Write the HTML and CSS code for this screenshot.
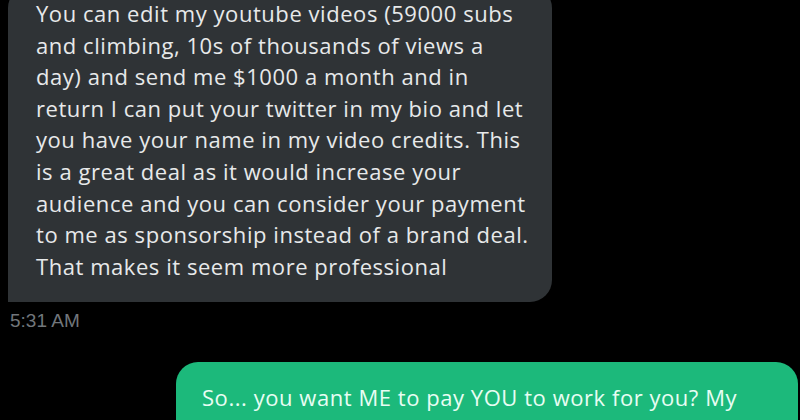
FILE: index.html
```html
<!DOCTYPE html>
<html>
<head>
<meta charset="utf-8">
<link rel="stylesheet" href="styles.css">
</head>
<body>
<div class="chat">
  <div class="msg-in">
    <div class="bubble-in">You can edit my youtube videos (59000 subs<br>and climbing, 10s of thousands of views a<br>day) and send me $1000 a month and in<br>return I can put your twitter in my bio and let<br>you have your name in my video credits. This<br>is a great deal as it would increase your<br>audience and you can consider your payment<br>to me as sponsorship instead of a brand deal.<br>That makes it seem more professional</div>
    <div class="time">5:31 AM</div>
  </div>
  <div class="msg-out">
    <div class="bubble-out">So... you want ME to pay YOU to work for you? My</div>
  </div>
</div>
</body>
</html>
```
FILE: styles.css
```css
html, body {
  margin: 0;
  padding: 0;
  background: #000;
  height: 420px;
  overflow: hidden;
}
.chat {
  display: flex;
  flex-direction: column;
}
.msg-in {
  display: flex;
  flex-direction: column;
  align-items: flex-start;
  margin-top: -14px;
}
.bubble-in {
  margin-left: 8px;
  width: 544px;
  box-sizing: border-box;
  padding: 12px 10px 20px 28px;
  background: #2f3336;
  color: #e7e9ea;
  font-family: "Open Sans", sans-serif;
  font-size: 22px;
  letter-spacing: 0.55px;
  line-height: 31.6px;
  white-space: nowrap;
  border-radius: 22px 22px 22px 0;
}
.time {
  margin: 8px 0 0 10px;
  font-family: "Liberation Sans", Arial, sans-serif;
  font-size: 19px;
  color: #71767b;
}
.msg-out {
  display: flex;
  justify-content: flex-end;
  margin-top: 30px;
}
.bubble-out {
  width: 622px;
  margin-right: 2px;
  box-sizing: border-box;
  padding: 20px 20px 30px 26px;
  background: #1cb97b;
  color: #e8fdf3;
  font-family: "Open Sans", sans-serif;
  font-size: 22px;
  letter-spacing: 0.55px;
  line-height: 31.6px;
  white-space: nowrap;
  border-radius: 22px 22px 0 22px;
}
```
